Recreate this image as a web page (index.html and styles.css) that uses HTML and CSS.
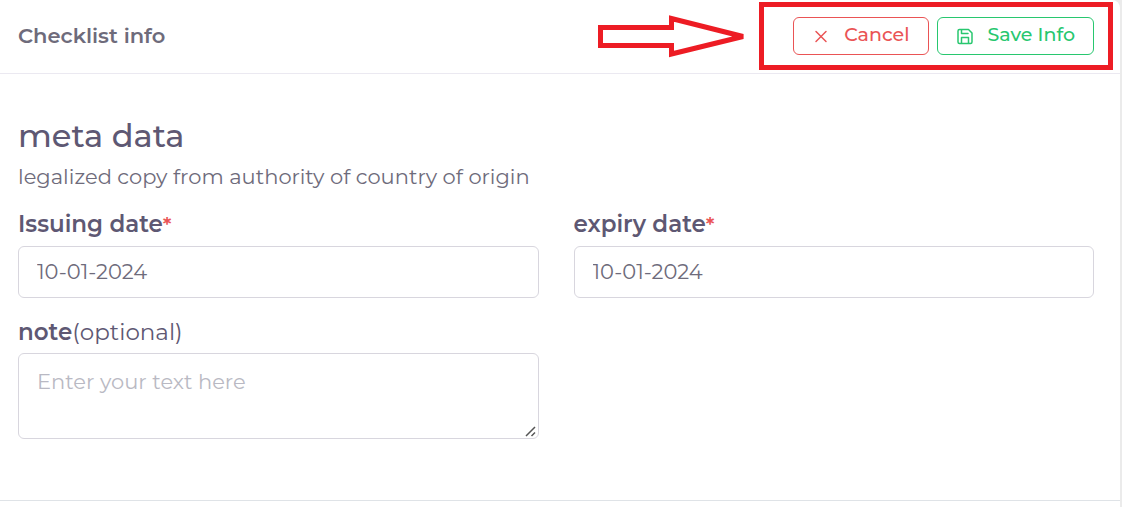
FILE: index.html
```html
<!DOCTYPE html>
<html lang="en">
<head>
<meta charset="utf-8">
<title>Checklist info</title>
<link rel="stylesheet" href="styles.css">
</head>
<body>
<main class="panel">
  <header class="panel-header">
    <h1 class="panel-title">Checklist info</h1>
    <div class="actions">
      <button type="button" class="btn btn-cancel">
        <svg class="icon" viewBox="0 0 18 18" aria-hidden="true"><path d="M4 4.500l10 10M14 4.500l-10 10"/></svg>
        <span>Cancel</span>
      </button>
      <button type="submit" form="info-form" class="btn btn-save">
        <svg class="icon" viewBox="0 0 18 18" aria-hidden="true"><path d="M3.500 2.500h9L16 6V15a1.500 1.500 0 0 1-1.500 1.500h-11A1.500 1.500 0 0 1 2 15V4A1.500 1.500 0 0 1 3.500 2.500zM5.500 2.500v4h6.500M5.500 16.500v-6h7v6"/></svg>
        <span>Save Info</span>
      </button>
    </div>
    <svg class="callout" viewBox="0 0 540 73" aria-hidden="true">
      <path d="M20.500 27.500H91.500V18.500L163 36.500 91.500 54V45.500H20.500z"/>
      <path d="M181.500 4.500h349v63h-349z"/>
    </svg>
  </header>
  <form class="panel-body" id="info-form">
    <h2 class="section-title">meta data</h2>
    <p class="section-text">legalized copy from authority of country of origin</p>
    <div class="fields">
      <div class="field">
        <label class="label" for="issuing">Issuing date<span class="required">*</span></label>
        <input class="control" id="issuing" type="text" value="10-01-2024">
      </div>
      <div class="field">
        <label class="label" for="expiry">expiry date<span class="required">*</span></label>
        <input class="control" id="expiry" type="text" value="10-01-2024">
      </div>
      <div class="field">
        <label class="label" for="note">note<span class="optional">(optional)</span></label>
        <textarea class="control control-area" id="note" rows="2" placeholder="Enter your text here"></textarea>
      </div>
    </div>
  </form>
</main>
</body>
</html>
```
FILE: styles.css
```css
* {
  box-sizing: border-box;
}

body {
  margin: 0;
  background: #ebebeb;
  color: #6e6b7b;
  font-family: Montserrat, Inter, "Open Sans", sans-serif;
  font-size: 21px;
}

.panel {
  margin-right: 2px;
  min-height: 100vh;
  background: #fff;
  border-top-right-radius: 8px;
}

.panel-header {
  position: relative;
  display: flex;
  align-items: center;
  justify-content: space-between;
  padding: 17px 26px 18px 18px;
  border-bottom: 1px solid #ebe9f1;
}

.panel-title {
  margin: 0;
  font-size: 21px;
  font-weight: 600;
  line-height: 32px;
}

.actions {
  display: flex;
  gap: 8px;
}

.btn {
  display: flex;
  align-items: center;
  gap: 14px;
  height: 38px;
  padding: 0 18px 2px;
  border: 1px solid;
  border-radius: 6px;
  background: transparent;
  font: 500 19px/24px Montserrat, Inter, "Open Sans", sans-serif;
}

.btn-cancel {
  color: #ea5455;
}

.btn-save {
  color: #28c76f;
}

.icon {
  width: 18px;
  height: 18px;
  margin-top: 2px;
  fill: none;
  stroke: currentColor;
  stroke-width: 1.500;
  stroke-linecap: round;
  stroke-linejoin: round;
}

.callout {
  position: absolute;
  top: 0;
  right: 0;
  width: 540px;
  height: 73px;
  fill: none;
  stroke: #ed1c24;
  stroke-width: 5;
  pointer-events: none;
}

.panel-body {
  padding: 42px 26px 61px 18px;
  border-bottom: 1px solid #dfe3e7;
}

.section-title {
  margin: 0;
  color: #5e5873;
  font-size: 32px;
  font-weight: 500;
  line-height: 40px;
}

.section-text {
  margin: 5px 0 17px;
  font-size: 21px;
  font-weight: 400;
  line-height: 32px;
}

.fields {
  display: grid;
  grid-template-columns: 1fr 1fr;
  gap: 20px 35px;
}

.label {
  display: block;
  margin-bottom: 7px;
  color: #5e5873;
  font-size: 23px;
  font-weight: 600;
  line-height: 28px;
}

.required {
  color: #ea5455;
  font-size: 21px;
  font-weight: 600;
}

.optional {
  font-weight: 400;
}

.control {
  display: block;
  width: 100%;
  height: 52px;
  padding: 8px 18px 10px;
  border: 1px solid #d8d6de;
  border-radius: 6px;
  background: #fff;
  color: #6e6b7b;
  font: 400 21px/30px Montserrat, Inter, "Open Sans", sans-serif;
}

.control-area {
  height: 86px;
  padding: 13px 18px;
  resize: vertical;
}

.control-area::-webkit-resizer {
  background: url("data:image/svg+xml,%3Csvg xmlns='http://www.w3.org/2000/svg' width='15' height='15'%3E%3Cpath d='M3 13L12 4M8.500 13L12 9.500' stroke='%23555' stroke-width='1.500'/%3E%3C/svg%3E") right bottom no-repeat;
}

.control::placeholder {
  color: #b9b9c3;
}
```
